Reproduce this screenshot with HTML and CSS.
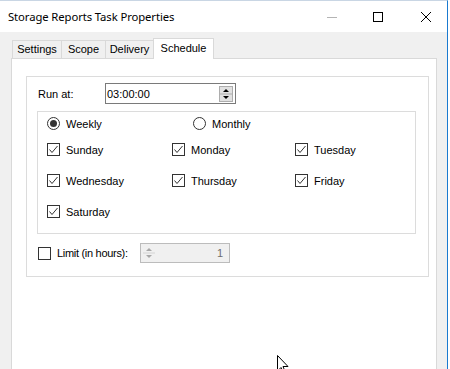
FILE: index.html
```html
<!DOCTYPE html>
<html lang="en">
<head>
    <meta charset="UTF-8">
    <title>Storage Reports Task Properties</title>
    <link rel="stylesheet" href="styles.css">
</head>
<body>

<div class="window">
    <div class="titlebar">
        <span class="title">Storage Reports Task Properties</span>
        <div class="caption-btn">
            <svg width="10" height="10" viewBox="0 0 10 10"><line x1="0" y1="5.5" x2="10" y2="5.5" stroke="#b4b4b4" stroke-width="1"/></svg>
        </div>
        <div class="caption-btn">
            <svg width="10" height="10" viewBox="0 0 10 10"><rect x="0.5" y="0.5" width="9" height="9" fill="none" stroke="#000" stroke-width="1"/></svg>
        </div>
        <div class="caption-btn close">
            <svg width="10" height="10" viewBox="0 0 10 10"><path d="M0 0 L10 10 M10 0 L0 10" stroke="#000" stroke-width="1"/></svg>
        </div>
    </div>

    <div class="client">
        <div class="tabs">
            <span class="tab tab-settings">Settings</span>
            <span class="tab tab-scope">Scope</span>
            <span class="tab tab-delivery">Delivery</span>
            <span class="tab tab-schedule active">Schedule</span>
        </div>

        <div class="panel">
            <div class="group">
                <div class="run-row">
                    <span class="run-label">Run at:</span>
                    <div class="time-input">
                        <span class="time-value">03:00:00</span>
                        <svg class="spin" width="14" height="16" viewBox="0 0 14 16">
                            <rect x="0.5" y="0.5" width="13" height="15" fill="#e1e1e1" stroke="#adadad"/>
                            <line x1="1" y1="8" x2="13" y2="8" stroke="#adadad"/>
                            <path d="M4 6 L7 3 L10 6 Z" fill="#000"/>
                            <path d="M4 10 L10 10 L7 13 Z" fill="#000"/>
                        </svg>
                    </div>
                </div>

                <div class="days-box">
                    <div class="radio-row">
                        <label class="opt col-1"><span class="radio checked"></span>Weekly</label>
                        <label class="opt col-2"><span class="radio"></span>Monthly</label>
                    </div>
                    <div class="days-grid" id="daysGrid"></div>
                </div>

                <div class="limit-row">
                    <label class="opt limit-label"><span class="check"></span>Limit (in hours):</label>
                    <div class="limit-input">
                        <svg class="spin" width="14" height="16" viewBox="0 0 14 16">
                            <line x1="1" y1="8" x2="13" y2="8" stroke="#d4d4d4"/>
                            <path d="M4 6 L7 3 L10 6 Z" fill="#a8a8a8"/>
                            <path d="M4 10 L10 10 L7 13 Z" fill="#a8a8a8"/>
                        </svg>
                        <span class="limit-value">1</span>
                    </div>
                </div>
            </div>
        </div>
    </div>

    <svg class="cursor" width="14" height="20" viewBox="0 0 14 20">
        <path d="M1.5 0.5 L1.5 16 L5 12.5 L7.5 18.5 L9.5 17.5 L7 11.5 L12 11.5 Z" fill="#fff" stroke="#000" stroke-width="1"/>
    </svg>
</div>

<script>
    let days = ["Sunday", "Monday", "Tuesday", "Wednesday", "Thursday", "Friday", "Saturday"];
    let grid = document.getElementById("daysGrid");

    days.forEach(day => {
        let item = document.createElement("label");
        item.className = "opt";
        item.innerHTML = '<span class="check checked"><svg width="11" height="11" viewBox="0 0 11 11"><polyline points="1.5,5.5 4,8.5 9.5,2" fill="none" stroke="#333" stroke-width="1"/></svg></span>' + day;
        grid.appendChild(item);
    });
</script>

</body>
</html>
```

FILE: styles.css
```css
html, body {
    margin: 0;
    padding: 0;
    background-color: #fff;
    overflow: hidden;
}
.window {
    position: relative;
    width: 448px;
    height: 369px;
    box-sizing: border-box;
    border-top: 1px solid #c9d6e4;
    border-right: 1px solid #1a7ad0;
    display: flex;
    flex-direction: column;
    font-family: "Liberation Sans", Arial, sans-serif;
    font-size: 11px;
    color: #000;
}
.titlebar {
    height: 31px;
    display: flex;
    align-items: center;
    background-color: #fff;
}
.title {
    flex: 1;
    padding-left: 8px;
    font-family: "Noto Sans", "Open Sans", sans-serif;
    font-size: 11.3px;
    letter-spacing: -0.1px;
}
.caption-btn {
    width: 46px;
    height: 31px;
    display: flex;
    align-items: center;
    justify-content: center;
}
.caption-btn.close {
    padding-left: 4px;
    box-sizing: border-box;
}
.client {
    flex: 1;
    background-color: #f0f0f0;
    padding: 6px 0 0 11px;
    display: flex;
    flex-direction: column;
}
.tabs {
    display: flex;
    align-items: flex-end;
    height: 20px;
    padding-left: 1px;
}
.tab {
    box-sizing: border-box;
    height: 18px;
    line-height: 16px;
    border: 1px solid #d9d9d9;
    border-bottom: none;
    margin-left: -1px;
    background-color: #f0f0f0;
    text-align: center;
}
.tab:first-child {
    margin-left: 0;
}
.tab-settings { width: 50px; }
.tab-scope { width: 45px; }
.tab-delivery { width: 49px; }
.tab.active {
    width: 61px;
    height: 21px;
    line-height: 18px;
    margin-bottom: -1px;
    background-color: #fff;
    position: relative;
    z-index: 1;
    padding-bottom: 2px;
}
.panel {
    flex: 1;
    width: 426px;
    box-sizing: border-box;
    background-color: #fff;
    border: 1px solid #d9d9d9;
    border-bottom: none;
    padding: 17px 0 0 14px;
}
.group {
    width: 403px;
    height: 201px;
    box-sizing: border-box;
    border: 1px solid #dcdcdc;
    padding: 6px 0 0 11px;
}
.run-row {
    display: flex;
    align-items: center;
    height: 21px;
}
.run-label {
    width: 67px;
}
.time-input {
    width: 131px;
    height: 21px;
    box-sizing: border-box;
    border: 1px solid #7a7a7a;
    display: flex;
    align-items: center;
    padding: 0 2px 0 1px;
}
.time-value {
    flex: 1;
}
.days-box {
    margin: 7px 0 0 -1px;
    width: 379px;
    height: 123px;
    box-sizing: border-box;
    border: 1px solid #dcdcdc;
    padding: 1px 0 0 9px;
}
.radio-row {
    height: 21px;
    display: flex;
    align-items: center;
}
.radio-row .col-1 {
    width: 146px;
}
.opt {
    display: flex;
    align-items: center;
    gap: 6px;
    white-space: nowrap;
}
.radio {
    width: 13px;
    height: 13px;
    box-sizing: border-box;
    border: 1px solid #333;
    border-radius: 50%;
    display: flex;
    align-items: center;
    justify-content: center;
    flex-shrink: 0;
}
.radio.checked::after {
    content: "";
    width: 7px;
    height: 7px;
    border-radius: 50%;
    background-color: #333;
}
.days-grid {
    display: grid;
    grid-template-columns: 125px 123px 1fr;
    grid-auto-rows: 31px;
    align-items: center;
}
.check {
    width: 13px;
    height: 13px;
    box-sizing: border-box;
    border: 1px solid #333;
    display: flex;
    align-items: center;
    justify-content: center;
    flex-shrink: 0;
}
.limit-row {
    display: flex;
    align-items: center;
    margin-top: 9px;
    height: 20px;
}
.limit-label {
    width: 102px;
    letter-spacing: -0.3px;
}
.limit-input {
    width: 90px;
    height: 20px;
    box-sizing: border-box;
    border: 1px solid #bcbcbc;
    background-color: #f0f0f0;
    display: flex;
    align-items: center;
    padding: 0 6px 0 1px;
}
.limit-value {
    flex: 1;
    text-align: right;
    color: #6d6d6d;
}
.cursor {
    position: absolute;
    left: 276px;
    top: 354px;
}
```
